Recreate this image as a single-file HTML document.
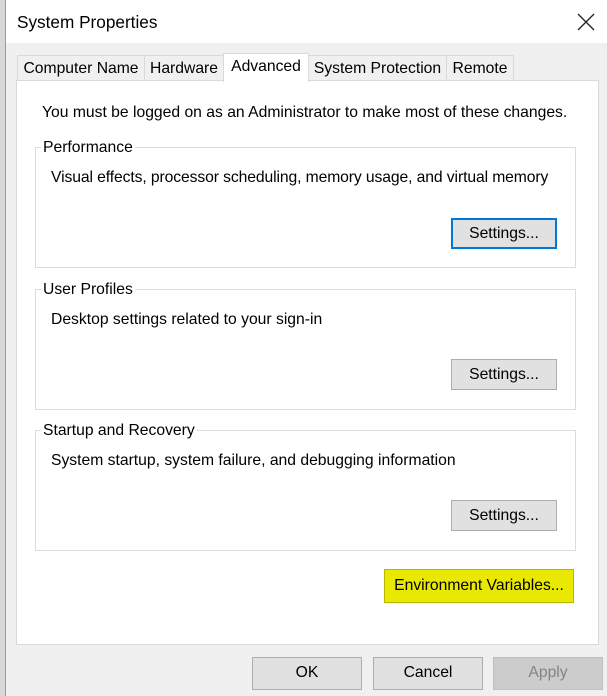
<!DOCTYPE html>
<html><head><style>
body{margin:0;width:607px;height:696px;overflow:hidden;background:#f0f0f0;font-family:"Liberation Sans",sans-serif;font-size:15.7px;color:#000;position:relative}
.a{position:absolute}
.strip{left:0;top:0;width:5px;height:696px;background:#d8d8d8;border-right:1px solid #9a9a9a}
.title{left:6px;top:0;width:601px;height:43px;background:#fff}
.tab{top:55px;height:24px;background:#f0f0f0;border:1px solid #d9d9d9;border-bottom:none;line-height:26px;text-align:center;font-size:15.7px}
.panel{left:16px;top:80px;width:581px;height:563px;background:#fff;border:1px solid #d9d9d9}
.grp{border:1px solid #dcdcdc;left:35px;width:539px;height:119px}
.lg{background:#fff;padding:0 2px;left:41px}
.btn{background:#e1e1e1;border:1px solid #adadad;text-align:center;line-height:30px;box-sizing:border-box}
</style></head><body>
<div class="a strip"></div>
<div class="a title"></div>
<div class="a" style="left:17px;top:12px;font-size:17.2px">System Properties</div>
<svg class="a" style="left:577px;top:13px" width="18" height="18"><path d="M1 1L17 17M17 1L1 17" stroke="#222" stroke-width="1.3"/></svg>
<div class="a panel"></div>
<div class="a tab" style="left:17px;width:126px">Computer Name</div>
<div class="a tab" style="left:144px;width:78px">Hardware</div>
<div class="a tab" style="left:223px;top:53px;height:28px;width:84px;background:#fff;line-height:26px">Advanced</div>
<div class="a tab" style="left:308px;width:137px">System Protection</div>
<div class="a tab" style="left:446px;width:66px">Remote</div>
<div class="a" style="left:42px;top:104px">You must be logged on as an Administrator to make most of these changes.</div>

<div class="a grp" style="top:147px"></div>
<div class="a lg" style="top:139px">Performance</div>
<div class="a" style="left:51px;top:169px;letter-spacing:-0.1px">Visual effects, processor scheduling, memory usage, and virtual memory</div>
<div class="a btn" style="left:451px;top:218px;width:106px;height:31px;border:2px solid #0078d7;line-height:27px">Settings...</div>

<div class="a grp" style="top:289px"></div>
<div class="a lg" style="top:281px">User Profiles</div>
<div class="a" style="left:51px;top:311px">Desktop settings related to your sign-in</div>
<div class="a btn" style="left:451px;top:359px;width:106px;height:31px">Settings...</div>

<div class="a grp" style="top:430px"></div>
<div class="a lg" style="top:422px">Startup and Recovery</div>
<div class="a" style="left:51px;top:452px">System startup, system failure, and debugging information</div>
<div class="a btn" style="left:451px;top:500px;width:106px;height:31px">Settings...</div>

<div class="a btn" style="left:384px;top:569px;width:190px;height:34px;background:#e8e800;border-color:#b8b800;line-height:32px">Environment Variables...</div>

<div class="a btn" style="left:252px;top:657px;width:110px;height:33px">OK</div>
<div class="a btn" style="left:373px;top:657px;width:110px;height:33px">Cancel</div>
<div class="a btn" style="left:493px;top:657px;width:110px;height:33px;background:#cccccc;border-color:#bfbfbf;color:#838383">Apply</div>
</body></html>
